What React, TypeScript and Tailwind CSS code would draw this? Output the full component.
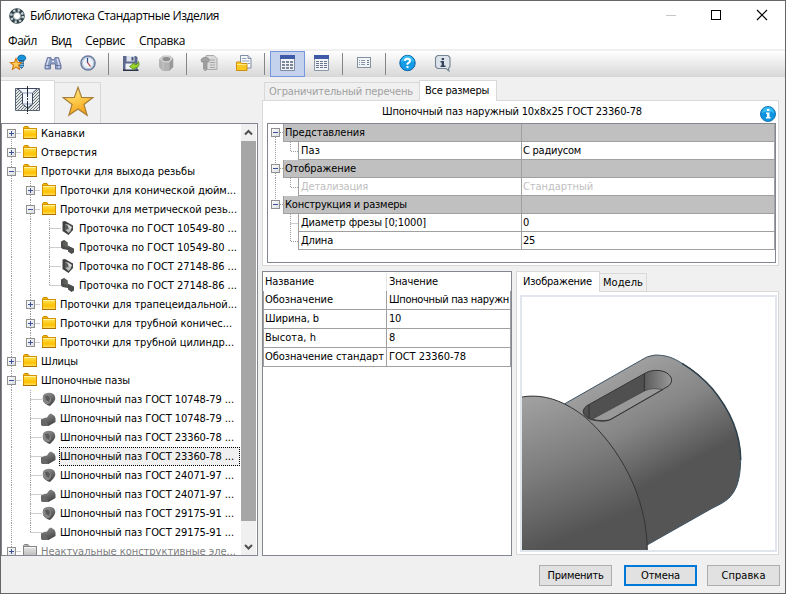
import React, { useLayoutEffect, useRef } from "react";

/* Single-line label whose tracking is adjusted so that it spans `w` pixels. */
function T({ w, children, className = "" }: { w: number; children: string; className?: string }) {
  const ref = useRef<HTMLSpanElement>(null);
  useLayoutEffect(() => {
    const el = ref.current;
    if (!el) return;
    el.style.letterSpacing = "0px";
    const natural = el.getBoundingClientRect().width;
    el.style.letterSpacing = `${(w - natural) / children.length}px`;
  }, [w, children]);
  return (
    <span ref={ref} className={`inline-block shrink-0 whitespace-pre ${className}`}>
      {children}
    </span>
  );
}

/* ---------- toolbar icons ---------- */

const STAR = "M10 0 L12.6 6.6 L20 7.2 L14.4 11.8 L16.2 19 L10 15 L3.8 19 L5.6 11.8 L0 7.2 L7.4 6.6Z";

function Ico({ children }: { children: React.ReactNode }) {
  return (
    <svg width="18" height="18" viewBox="0 0 18 18" className="shrink-0">
      {children}
    </svg>
  );
}

const icoFavScrew = (
  <Ico>
    <path d="M8.500 4.500Q9 1 12.500 1Q16 .8 17 4L15.500 6.500H9.500Z" fill="#1694d8" stroke="#0b5c95" strokeWidth=".8" />
    <path d="M10.500 6.500h4v6l-2 2-2-2z" fill="#2e7fb8" stroke="#174f7c" strokeWidth=".7" />
    <path d="M10.500 8.500h4M10.500 10.500h4M10.500 12.500h4" stroke="#9ad4f4" strokeWidth=".7" />
    <g transform="translate(1.300 4.500) scale(.57)">
      <path d={STAR} fill="#ffc95a" stroke="#d0740c" strokeWidth="1.800" />
    </g>
  </Ico>
);
const icoBinoculars = (
  <Ico>
    <path d="M3.500 3.500h3.500l.5 2h3l.5-2H14.500l2.500 8v3.500h-5.500v-5h-5v5H1v-3.500z" fill="#8c9bc0" stroke="#6473a0" strokeWidth=".9" />
    <path d="M4.800 4.500L3 10.500v3.500M13.200 4.500L15 10.500v3.500M8 7.500h2" fill="none" stroke="#dbe2f2" strokeWidth="1.300" />
    <path d="M1.500 11.500h5M11.500 11.500h5" stroke="#5a6996" strokeWidth=".8" />
  </Ico>
);
const icoClock = (
  <Ico>
    <circle cx="9" cy="9" r="7" fill="#edf2f8" stroke="#6b7d9e" strokeWidth="1.600" />
    <circle cx="9" cy="9" r="5.600" fill="none" stroke="#b4c2d8" strokeWidth="1" />
    <path d="M8.500 4V9" stroke="#334c86" strokeWidth="1.200" />
    <path d="M8.500 8.500l3 4" stroke="#c83b3b" strokeWidth="1.200" />
  </Ico>
);
const icoSave = (
  <Ico>
    <path d="M1 2h13l1.500 1.500V16H1z" fill="#5c698c" />
    <path d="M4.500 2h8v5.500h-8z" fill="#dde3ee" />
    <path d="M9.500 3h2v3.500h-2z" fill="#46506e" />
    <path d="M3.500 9.500h10V16h-10z" fill="#eef1f6" />
    <path d="M1 15.500h15.500v1.500H1z" fill="#2a3046" />
    <path d="M16.500 7.500c1.500 4-.5 6.500-4 6.500v2L7.500 12.500l5-3.800v2c2.500 0 3.500-1 4-3.200z" fill="#9ed62a" stroke="#4b8a10" strokeWidth=".8" />
  </Ico>
);
const icoNut = (
  <Ico>
    <path d="M2.500 5L6 2h7l3 2.500V13l-3.500 3.500H5.500L2.500 13z" fill="#b3b3b3" stroke="#a4a4a4" strokeWidth=".6" />
    <path d="M2.500 5L6 2h7l3 2.500L12.500 8.500H6z" fill="#cfcfcf" />
    <ellipse cx="9.300" cy="5" rx="3.800" ry="2" fill="#8c8c8c" />
    <path d="M12.500 8.500L16 4.500V13l-3.500 3.500z" fill="#999" />
    <path d="M6 8.500v8" stroke="#c8c8c8" />
  </Ico>
);
const icoScrewDoc = (
  <Ico>
    <path d="M6 1.500h8l3 3v11H6z" fill="#dadada" stroke="#a5a5a5" strokeWidth=".9" />
    <path d="M10 6h5M10 8.500h5M10 11h5M10 13.500h5" stroke="#a8a8a8" />
    <path d="M1 5.500Q5 1 9.500 5.500L8.500 8h-7z" fill="#a3a3a3" stroke="#8c8c8c" strokeWidth=".8" />
    <path d="M3.500 8h3.500v7l-1.800 2-1.700-2z" fill="#adadad" stroke="#8e8e8e" strokeWidth=".7" />
    <path d="M3.500 10h3.500M3.500 12h3.500M3.500 14h3.500" stroke="#808080" strokeWidth=".6" />
  </Ico>
);
const icoFolderDoc = (
  <Ico>
    <path d="M5.500 1.500h7.500l3 3v9.500h-10.500z" fill="#f6f8fb" stroke="#71829b" strokeWidth=".9" />
    <path d="M13 1.500v3h3" fill="#cdd6e3" stroke="#71829b" strokeWidth=".8" />
    <path d="M7 4.500h4.500M7 7h7.500M12.500 9.500h2.500" stroke="#8fa0b8" />
    <path d="M1.500 8h4l1 1.500h5.500v7h-10.500z" fill="#fbc924" stroke="#c98602" strokeWidth=".9" />
    <path d="M2 10.500h9.500" stroke="#ffe88a" />
  </Ico>
);
const icoGrid = (
  <Ico>
    <path d="M1.500 1.500h14v15h-14z" fill="#f2f4f7" stroke="#8089a0" />
    <path d="M1 1h15v4H1z" fill="#3f5aa6" />
    {[3.5, 7.5, 11.5].map((x) =>
      [7.5, 10.5, 13.5].map((y) => (
        <rect key={`${x}-${y}`} x={x - 0} y={y - 0} width="2" height="1" fill="#fff" stroke="#7c879c" strokeWidth="1" />
      ))
    )}
  </Ico>
);
const icoTable = (
  <Ico>
    <path d="M1.500 1.500h14v15h-14z" fill="#f2f4f7" stroke="#8d97aa" />
    <path d="M1 1h15v4H1z" fill="#3f5aa6" />
    <path d="M3 7.500h11M3 9.500h11M3 11.500h11M3 13.500h11" stroke="#68758e" strokeWidth="1" strokeDasharray="3 1" />
  </Ico>
);
const icoList = (
  <Ico>
    <rect x="1.500" y="3.500" width="13" height="10" fill="#f2f5f7" stroke="#8391a0" />
    <path d="M3 6.500h6M3 8.500h6M3 10.500h6" stroke="#8d99a8" strokeDasharray="1 1 4" />
    <path d="M11 6.500h2M11 8.500h2M11 10.500h2" stroke="#6f7c8d" />
  </Ico>
);
const icoHelp = (
  <Ico>
    <circle cx="8.500" cy="9" r="7.700" fill="#169be6" stroke="#0c62a4" />
    <path d="M2 8a6.500 6.500 0 0 1 13 0Q8.500 5 2 8" fill="#36bcf5" />
    <path d="M6 7Q6 4.800 8.500 4.800T11 7Q11 8.200 8.500 9.600V10.800" fill="none" stroke="#fff" strokeWidth="2" />
    <path d="M7.500 12h2v2h-2z" fill="#fff" />
  </Ico>
);
const icoInfoBubble = (
  <Ico>
    <path d="M3.500 1.500h10.500l2 2v9l-1.500 2 .5 2.500-3-2.500H3.500l-2-2v-9z" fill="#dde3ea" stroke="#768592" strokeWidth="1.100" />
    <path d="M7.700 4H10v2H7.700zM6.500 7H10v4.500h1.500V13h-5v-1.500h1.200V8.500H6.500z" fill="#33425a" />
  </Ico>
);

function ToolButton({ children, active = false }: { children: React.ReactNode; active?: boolean }) {
  return (
    <div className={`flex h-[26px] w-[35px] shrink-0 items-center pb-[2px] pl-[8px] ${active ? "border border-[#7497e0] bg-[#c4d2ee] pb-[2px] pl-[7px]" : ""}`}>
      {children}
    </div>
  );
}
const Sep = () => (
  <div className="flex h-[26px] w-2 shrink-0 items-center pl-[2px]">
    <div className="h-[22px] w-px bg-[#858585]" />
  </div>
);

/* ---------- tree ---------- */

type Kind = "folder" | "gray" | "hollow" | "solid" | "disc" | "cyl";
type Row = { depth: number; box?: "+" | "-"; kind: Kind; text: string; w: number; last?: boolean; selected?: boolean };

const rows: Row[] = [
  { depth: 0, box: "+", kind: "folder", text: "Канавки", w: 44 },
  { depth: 0, box: "+", kind: "folder", text: "Отверстия", w: 56 },
  { depth: 0, box: "-", kind: "folder", text: "Проточки для выхода резьбы", w: 154 },
  { depth: 1, box: "+", kind: "folder", text: "Проточки для конической дюйм...", w: 176 },
  { depth: 1, box: "-", kind: "folder", text: "Проточки для метрической резь...", w: 177 },
  { depth: 2, kind: "hollow", text: "Проточка по ГОСТ 10549-80 ...", w: 158 },
  { depth: 2, kind: "solid", text: "Проточка по ГОСТ 10549-80 ...", w: 158 },
  { depth: 2, kind: "hollow", text: "Проточка по ГОСТ 27148-86 ...", w: 158 },
  { depth: 2, kind: "solid", text: "Проточка по ГОСТ 27148-86 ...", w: 158, last: true },
  { depth: 1, box: "+", kind: "folder", text: "Проточки для трапецеидальной...", w: 177 },
  { depth: 1, box: "+", kind: "folder", text: "Проточки для трубной коничес...", w: 172 },
  { depth: 1, box: "+", kind: "folder", text: "Проточки для трубной цилиндр...", w: 174, last: true },
  { depth: 0, box: "+", kind: "folder", text: "Шлицы", w: 37 },
  { depth: 0, box: "-", kind: "folder", text: "Шпоночные пазы", w: 89 },
  { depth: 1, kind: "disc", text: "Шпоночный паз ГОСТ 10748-79 ...", w: 174 },
  { depth: 1, kind: "cyl", text: "Шпоночный паз ГОСТ 10748-79 ...", w: 174 },
  { depth: 1, kind: "disc", text: "Шпоночный паз ГОСТ 23360-78 ...", w: 174 },
  { depth: 1, kind: "cyl", text: "Шпоночный паз ГОСТ 23360-78 ...", w: 174, selected: true },
  { depth: 1, kind: "disc", text: "Шпоночный паз ГОСТ 24071-97 ...", w: 174 },
  { depth: 1, kind: "cyl", text: "Шпоночный паз ГОСТ 24071-97 ...", w: 174 },
  { depth: 1, kind: "disc", text: "Шпоночный паз ГОСТ 29175-91 ...", w: 174 },
  { depth: 1, kind: "cyl", text: "Шпоночный паз ГОСТ 29175-91 ...", w: 174, last: true },
  { depth: 0, box: "+", kind: "gray", text: "Неактуальные конструктивные эле...", w: 195, last: true },
];

function Expander({ x, y, plus }: { x: number; y: number; plus: boolean }) {
  return (
    <g transform={`translate(${x} ${y})`}>
      <rect x=".5" y=".5" width="8" height="8" fill="url(#boxFill)" stroke="#919191" />
      <path d={plus ? "M2 4.500h5M4.500 2v5" : "M2 4.500h5"} stroke="#3c539c" />
    </g>
  );
}

function KindIcon({ kind }: { kind: Kind }) {
  if (kind === "folder" || kind === "gray") {
    const g = kind === "gray";
    return (
      <g>
        <path d="M.5 3V1.500L1.500.5h3.500l1 1.500v1z" fill={g ? "#b8b8b8" : "#f5b800"} stroke={g ? "#858585" : "#cc8a00"} />
        <rect x=".5" y="2.500" width="13" height="10" fill={g ? "url(#folderGray)" : "url(#folderFill)"} stroke={g ? "#858585" : "#d39200"} />
        <path d="M1 3.500h12" stroke={g ? "#f4f4f4" : "#fff3a0"} />
        <path d="M0 12.500h14" stroke={g ? "#777" : "#a87000"} />
      </g>
    );
  }
  if (kind === "hollow")
    return (
      <g transform="translate(1 0)">
        <path d="M.5.500L3 0l8 4.500v4.500L6.500 14 .5 10z" fill="#414241" />
        <path d="M3 3l3.500 .5L10 6 8.500 10l-2 2L3 8.500z" fill="#b9bcbc" />
        <path d="M3 3l3 2 .5 3-3.500 1z" fill="#5a5d5c" />
        <path d="M5.500 4l4 2-1 2z" fill="#e4e6e6" />
      </g>
    );
  if (kind === "solid")
    return (
      <g>
        <path d="M0 1.500L3 0 6.500 2.500V5.500L13 8.500v4L10.500 14 7 11.500V10L1.500 9 0 7.500z" fill="#4b4e4a" />
        <path d="M3 0L6.500 2.500v3L9 7 6 8 1.500 5z" fill="#5b5e59" />
      </g>
    );
  if (kind === "disc")
    return (
      <g>
        <path d="M1 4Q2.500.8 7 .8Q12 .8 13 4.500Q14.500 8.500 8 14Q3 12.500 1 9z" fill="url(#metal)" />
        <ellipse cx="4.800" cy="7" rx="4" ry="5.200" fill="#858585" transform="rotate(-20 4.800 7)" />
        <path d="M3 4l3-.5 2 2.500-1 4-3-2z" fill="#5a5a5a" />
      </g>
    );
  return (
    <g transform="translate(-1 2)">
      <path d="M0 6.500Q3 4.500 6 4.500L8 1.500 10 .5Q13.500 2 14.500 5.500V9L7.500 13H1L0 11z" fill="url(#metal)" />
      <path d="M0 6.500Q5 5.500 7.500 13H1L0 11z" fill="#676767" />
    </g>
  );
}

function TreeRow({ row, i }: { row: Row; i: number }) {
  const gutter = 39 + row.depth * 19;
  const center = 9 + row.depth * 19;
  const dot = { stroke: "#9d9d9d", strokeDasharray: "1 1" };
  return (
    <div className="flex h-[19px] shrink-0 items-center">
      <svg width={gutter} height="19" viewBox={`0 0 ${gutter} 19`} className="shrink-0">
        <path d={i === 0 ? "M9.500 9v10" : i === 22 ? "M9.500 0v9" : "M9.500 0v19"} {...dot} />
        {row.depth === 2 && <path d="M28.500 0v19" {...dot} />}
        {row.depth > 0 && <path d={`M${center + 0.5} 0v${row.last ? 9 : 19}`} {...dot} />}
        <path d={`M${center + 0.5} 9.500h${row.box ? 10 : 11}`} {...dot} />
        {row.box && <Expander x={center - 4} y={5} plus={row.box === "+"} />}
        <g transform={`translate(${gutter - 18} 2)`}>
          <KindIcon kind={row.kind} />
        </g>
      </svg>
      {row.selected ? (
        <div className="-ml-px flex h-[19px] w-[181px] items-center border border-dotted border-black bg-[#f0f0f0]">
          <T w={row.w}>{row.text}</T>
        </div>
      ) : (
        <T w={row.w} className={row.kind === "gray" ? "text-[#808080]" : ""}>{row.text}</T>
      )}
    </div>
  );
}

function Tree() {
  return (
    <div className="flex h-[433px] w-[257px] border border-[#828790] bg-white">
      <div className="flex w-[239px] flex-col overflow-hidden">
        {rows.map((r, i) => (
          <TreeRow key={i} row={r} i={i} />
        ))}
      </div>
      <div className="flex w-[15px] flex-col bg-[#f0f0f0]">
        <svg width="15" height="17" viewBox="0 0 15 17">
          <path d="M4 10.500L7.500 7l3.500 3.500" fill="none" stroke="#505050" strokeWidth="2" />
        </svg>
        <div className="h-[380px] bg-[#a6a6a6]" />
        <svg width="15" height="34" viewBox="0 0 15 34">
          <path d="M4 24l3.500 3.500L11 24" fill="none" stroke="#505050" strokeWidth="2" />
        </svg>
      </div>
    </div>
  );
}

/* ---------- property grid ---------- */

type Prop = { head?: boolean; label: string; w: number; value?: string; vw?: number; dim?: boolean; last?: boolean; final?: boolean };
const props: Prop[] = [
  { head: true, label: "Представления", w: 80 },
  { label: "Паз", w: 19, value: "С радиусом", vw: 58, last: true },
  { head: true, label: "Отображение", w: 71 },
  { label: "Детализация", w: 67, value: "Стандартный", vw: 70, dim: true, last: true },
  { head: true, label: "Конструкция и размеры", w: 122, final: true },
  { label: "Диаметр фрезы [0;1000]", w: 125, value: "0", vw: 6, final: true },
  { label: "Длина", w: 32, value: "25", vw: 12, last: true, final: true },
];

function PropRow({ p, first }: { p: Prop; first: boolean }) {
  const dot = { stroke: "#9d9d9d", strokeDasharray: "1 1" };
  const tone = p.head ? "bg-[#c0c0c0]" : "bg-white";
  return (
    <div className="flex h-[18px]">
      <svg width={p.head ? 15 : 30} height="18" viewBox={`0 0 ${p.head ? 15 : 30} 18`} className="shrink-0">
        {p.head && !first && <path d="M7.500 0v8" {...dot} />}
        {!p.final && <path d={p.head ? "M7.500 9v9" : "M7.500 0v18"} {...dot} />}
        {p.head ? (
          <>
            <path d="M12 8.500h3" {...dot} />
            <Expander x={3} y={4} plus={false} />
          </>
        ) : (
          <path d={p.last ? "M22.500 0v9.500H30" : "M22.500 0v18M22.500 9.500H30"} fill="none" {...dot} />
        )}
      </svg>
      <div className={`flex flex-1 items-center border-b border-l border-[#a0a0a0] ${p.head ? "pl-px" : "pl-[2px]"} ${tone} ${p.dim ? "text-[#c0c0c0]" : ""}`}>
        <T w={p.w}>{p.label}</T>
      </div>
      <div className={`flex w-[254px] items-center border-x border-b border-[#a0a0a0] pl-px ${tone} ${p.dim ? "text-[#c0c0c0]" : ""}`}>
        {p.value && <T w={p.vw ?? 10}>{p.value}</T>}
      </div>
    </div>
  );
}

const specs: [string, number, string, number][] = [
  ["Обозначение", 68, "Шпоночный паз наружн", 120],
  ["Ширина, b", 54, "10", 12],
  ["Высота, h", 51, "8", 6],
  ["Обозначение стандарт", 119, "ГОСТ 23360-78", 77],
];

function ShaftDrawing() {
  return (
    <svg width="253" height="253" viewBox="30 96 759 759" className="block">
      <defs>
        <linearGradient id="shaft" gradientUnits="userSpaceOnUse" x1="330" y1="310" x2="490" y2="615">
          <stop offset="0" stopColor="#a0a0a0" />
          <stop offset=".5" stopColor="#858585" />
          <stop offset="1" stopColor="#555" />
        </linearGradient>
        <linearGradient id="body" gradientUnits="userSpaceOnUse" x1="80" y1="390" x2="240" y2="790">
          <stop offset="0" stopColor="#a0a0a0" />
          <stop offset=".5" stopColor="#7d7d7d" />
          <stop offset="1" stopColor="#545454" />
        </linearGradient>
        <linearGradient id="slotEnd" x1="0" x2="1">
          <stop offset="0" stopColor="#5b5b5b" />
          <stop offset="1" stopColor="#999" />
        </linearGradient>
      </defs>
      <path d="M157 417L385 287Q405 272 430 270C462 271 480 276 510 295C545 316 572 338 600 370C650 430 686 505 686 590C684 645 674 676 650 700C635 714 615 722 600 730L400 843L150 700Z" fill="url(#shaft)" stroke="#3d5262" strokeWidth="3" />
      <path d="M510 295C545 316 572 338 600 370C650 430 686 505 686 585" fill="none" stroke="#2d404c" strokeWidth="4.500" />
      <path d="M225 422L397 326C415 314 445 313 463 323C482 335 484 352 468 364L300 461C288 470 265 471 235 463C212 452 206 436 225 422Z" fill="#505050" />
      <path d="M397 326C415 314 445 313 463 323C482 335 484 352 468 364L453 374L397 378Z" fill="url(#slotEnd)" />
      <path d="M240 463L397 378Q420 366 453 374L300 461Q282 471 240 463Z" fill="#999" stroke="#3b3b3b" strokeWidth="2" />
      <path d="M397 326V378M231 420V460" stroke="#303030" strokeWidth="3" />
      <path d="M225 422L397 326C415 314 445 313 463 323C482 335 484 352 468 364L300 461C288 470 265 471 235 463C212 452 206 436 225 422Z" fill="none" stroke="#333" strokeWidth="3" />
      <path d="M20 398Q35 395 45 394C110 389 165 414 220 457C320 545 406 692 406 860H20Z" fill="url(#body)" stroke="#303538" strokeWidth="3" />
    </svg>
  );
}

function Button({ w, primary = false, children }: { w: number; primary?: boolean; children: string }) {
  return (
    <div className={`flex h-[21px] w-[73px] items-center justify-center bg-[#e1e1e1] ${primary ? "border-2 border-[#0078d7]" : "border border-[#adadad]"}`}>
      <T w={w}>{children}</T>
    </div>
  );
}

export default function App() {
  return (
    <div className="flex h-[594px] w-[786px] flex-col overflow-hidden border border-[#666] bg-[#f0f0f0] text-[11px] leading-[14px] text-black [font-family:'DejaVu_Sans_Condensed','DejaVu_Sans',sans-serif] [font-stretch:condensed]">
      <svg width="0" height="0" className="absolute">
        <defs>
          <linearGradient id="boxFill" x2="1" y2="1">
            <stop offset="0" stopColor="#fff" />
            <stop offset="1" stopColor="#d9dbe0" />
          </linearGradient>
          <linearGradient id="folderFill" x2="0" y2="1">
            <stop offset="0" stopColor="#ffe45a" />
            <stop offset=".65" stopColor="#ffc000" />
            <stop offset="1" stopColor="#ffe36a" />
          </linearGradient>
          <linearGradient id="folderGray" x2="0" y2="1">
            <stop offset="0" stopColor="#e8e8e8" />
            <stop offset="1" stopColor="#b8b8b8" />
          </linearGradient>
          <linearGradient id="metal" x2=".5" y2="1">
            <stop offset="0" stopColor="#999" />
            <stop offset="1" stopColor="#484848" />
          </linearGradient>
        </defs>
      </svg>

      {/* title bar */}
      <div className="flex h-[29px] shrink-0 items-center bg-white pl-2 text-[12px] [font-family:'Open_Sans','Noto_Sans',sans-serif] [font-stretch:normal]">
        <svg width="16" height="16" viewBox="0 0 16 16" className="mr-[5px]">
          <circle cx="8" cy="8" r="5.800" fill="none" stroke="#34434a" strokeWidth="4" />
          <circle cx="8" cy="8" r="5.800" fill="none" stroke="#c3d0d4" strokeWidth="2.400" strokeDasharray="2.200 2.355" />
          <circle cx="8" cy="8" r="3.600" fill="#fff" stroke="#596b70" strokeWidth=".6" />
        </svg>
        <T w={189}>Библиотека Стандартные Изделия</T>
        <svg width="102" height="12" viewBox="0 0 102 12" className="ml-auto mr-[17px] -mt-px" shapeRendering="crispEdges">
          <path d="M0 6.500h10" stroke="#c6c6c6" />
          <rect x="45.500" y="1.500" width="9" height="9" fill="none" stroke="#000" />
          <path d="M91 1l10 10M101 1L91 11" stroke="#000" shapeRendering="auto" strokeWidth="1.200" />
        </svg>
      </div>

      {/* menu */}
      <div className="flex h-[19px] shrink-0 items-center gap-[14px] bg-white pl-[7px] pt-[3px] text-[12px] [font-family:'Open_Sans','Noto_Sans',sans-serif] [font-stretch:normal]">
        <T w={29}>Файл</T>
        <T w={20}>Вид</T>
        <T w={40}>Сервис</T>
        <T w={46}>Справка</T>
      </div>

      {/* toolbar */}
      <div className="mt-[2px] flex h-[26px] shrink-0 bg-gradient-to-b from-white to-[#d7d7d7]">
        <ToolButton>{icoFavScrew}</ToolButton>
        <ToolButton>{icoBinoculars}</ToolButton>
        <ToolButton>{icoClock}</ToolButton>
        <Sep />
        <ToolButton>{icoSave}</ToolButton>
        <ToolButton>{icoNut}</ToolButton>
        <Sep />
        <ToolButton>{icoScrewDoc}</ToolButton>
        <ToolButton>{icoFolderDoc}</ToolButton>
        <Sep />
        <ToolButton active>{icoGrid}</ToolButton>
        <ToolButton>{icoTable}</ToolButton>
        <Sep />
        <ToolButton>{icoList}</ToolButton>
        <Sep />
        <ToolButton>{icoHelp}</ToolButton>
        <ToolButton>{icoInfoBubble}</ToolButton>
      </div>

      <div className="flex h-[479px] shrink-0 pt-[3px]">
        {/* library tree */}
        <div className="flex w-[257px] flex-col">
          <div className="flex h-[43px] items-end">
            <div className="flex h-[43px] w-[54px] items-center justify-center border-r border-t border-[#d9d9d9] bg-white pb-1">
              <svg width="26" height="28" viewBox="0 0 26 28">
                <defs>
                  <pattern id="hatch" width="3" height="3" patternUnits="userSpaceOnUse">
                    <path d="M-1 1l2-2M0 3l3-3M2 4l2-2" stroke="#4c5560" strokeWidth=".8" />
                  </pattern>
                </defs>
                <path d="M.5 2.500h24v22H.5z" fill="#e2e8e6" />
                <path d="M.5 2.500h24v22H.5z" fill="url(#hatch)" stroke="#596270" />
                <path d="M2.500 2.500h20L17.500 7V18l-5 4-5-4V7z" fill="#f2f6ff" stroke="#3d485c" />
                <path d="M7.500 7h10M7.500 18h10" fill="none" stroke="#8c9bb4" />
                <path d="M12.500 0v28" stroke="#20262e" strokeDasharray="11 1 2 1" />
              </svg>
            </div>
            <div className="flex h-[41px] w-[46px] items-center justify-center border-r border-t border-[#d9d9d9] pb-[3px]">
              <svg width="32" height="31" viewBox="0 0 21 20">
                <defs>
                  <linearGradient id="gold" x2=".3" y2="1">
                    <stop offset="0" stopColor="#fff0a0" />
                    <stop offset=".5" stopColor="#ffce52" />
                    <stop offset="1" stopColor="#f3a51b" />
                  </linearGradient>
                </defs>
                <path d="M10.500 .7L12.900 7.300L20.100 7.500L14.400 11.900L16.500 19L10.500 14.900L4.500 19L6.600 11.900L.9 7.500L8.100 7.300Z" fill="url(#gold)" stroke="#a88035" strokeWidth=".8" />
              </svg>
            </div>
          </div>
          <Tree />
        </div>

        {/* parameters */}
        <div className="ml-1 flex w-[517px] flex-col">
          <div className="flex h-[20px] items-end pl-[2px]">
            <div className="flex h-[18px] w-[155px] items-center border-l border-t border-[#d9d9d9] pl-[4px] text-[#a0a0a0]">
              <T w={144}>Ограничительный перечень</T>
            </div>
            <div className="z-10 -mb-px flex h-[21px] w-[78px] items-center border border-b-0 border-[#d9d9d9] bg-white pl-[5px]">
              <T w={64}>Все размеры</T>
            </div>
          </div>
          <div className="h-[166px] border border-[#d9d9d9] bg-white px-1">
            <div className="flex h-[22px] items-center pl-[115px]">
              <T w={260}>Шпоночный паз наружный 10x8x25 ГОСТ 23360-78</T>
              <svg width="16" height="16" viewBox="0 0 16 16" className="-mr-[2px] ml-auto mt-[3px]">
                <circle cx="8" cy="8" r="7.500" fill="#1094e0" stroke="#1673b0" />
                <path d="M2 7a6 6 0 0 1 12 0Q8 4 2 7" fill="#36bcf5" />
                <path d="M7 3h2.500v2H7zM6 6.500h3.500v4.500h1v1.500H6V11h1V8H6z" fill="#fff" />
              </svg>
            </div>
            <div className="h-[140px] w-[509px] border border-[#828790]">
              {props.map((p, i) => (
                <PropRow key={i} p={p} first={i === 0} />
              ))}
            </div>
          </div>

          <div className="mt-[5px] flex">
            {/* specification list */}
            <div className="flex h-[285px] w-[250px] flex-col border border-[#828790] bg-white">
              <div className="flex h-[19px] items-center pt-px">
                <div className="flex h-full w-[124px] items-center border-r border-[#e5e5e5] pl-[2px]">
                  <T w={49}>Название</T>
                </div>
                <div className="pl-[2px]">
                  <T w={49}>Значение</T>
                </div>
              </div>
              {specs.map(([a, aw, b, bw]) => (
                <div key={a} className="flex h-[19px] border-x border-b border-[#a0a0a0]">
                  <div className="flex w-[123px] items-center border-r border-[#a0a0a0] pl-px">
                    <T w={aw}>{a}</T>
                  </div>
                  <div className="flex w-[122px] items-center pl-[2px]">
                    <T w={bw}>{b}</T>
                  </div>
                </div>
              ))}
            </div>

            {/* preview */}
            <div className="ml-1 flex w-[263px] flex-col">
              <div className="flex h-[20px] items-end">
                <div className="z-10 -mb-px flex h-[21px] w-[84px] items-center border border-b-0 border-[#d9d9d9] bg-white pl-[6px]">
                  <T w={69}>Изображение</T>
                </div>
                <div className="flex h-[18px] w-[47px] items-center border-r border-t border-[#d9d9d9] pl-[3px] pt-px">
                  <T w={40}>Модель</T>
                </div>
              </div>
              <div className="h-[264px] border border-[#d9d9d9] bg-white p-[3px]">
                <div className="h-[257px] w-[257px] border-2 border-[#e1e6ec]">
                  <ShaftDrawing />
                </div>
              </div>
            </div>
          </div>
        </div>
      </div>

      {/* dialog buttons */}
      <div className="mt-[9px] flex shrink-0 pl-[538px]">
        <Button w={56}>Применить</Button>
        <div className="ml-3">
          <Button w={39} primary>Отмена</Button>
        </div>
        <div className="ml-[10px]">
          <Button w={44}>Справка</Button>
        </div>
      </div>
    </div>
  );
}
